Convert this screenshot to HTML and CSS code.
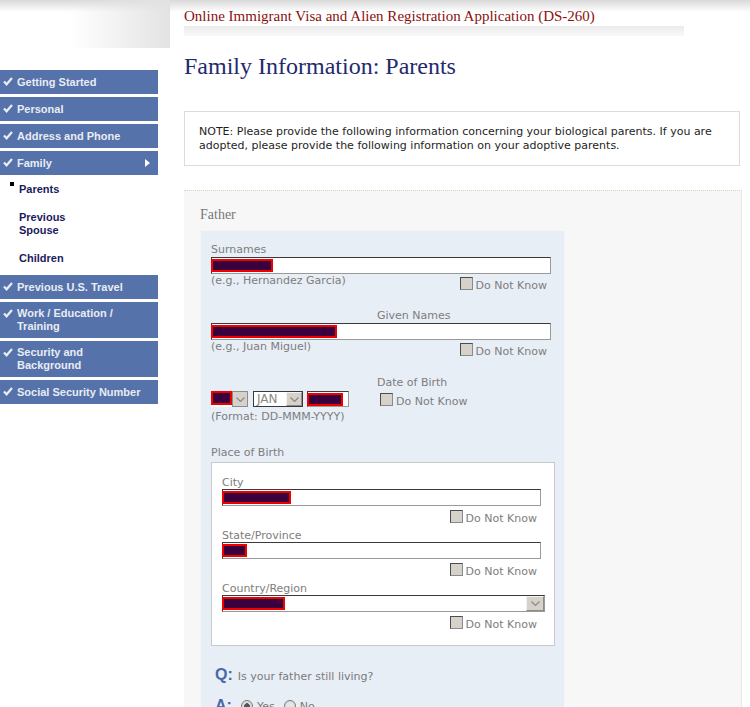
FILE: index.html
```html
<!DOCTYPE html>
<html>
<head>
<meta charset="utf-8">
<title>DS-260 Family Information: Parents</title>
<link rel="stylesheet" href="styles.css">
</head>
<body>
<div class="page">
  <aside class="side">
    <div class="brand"></div>
    <ul class="nav">
      <li class="nav-item"><svg class="chk" width="17" height="13" viewBox="0 0 17 13"><path d="M5 6.5l2.6 2.8L13 3" fill="none" stroke="#e9edf5" stroke-width="2.2"/></svg><span class="nav-text">Getting Started</span></li>
      <li class="nav-item"><svg class="chk" width="17" height="13" viewBox="0 0 17 13"><path d="M5 6.5l2.6 2.8L13 3" fill="none" stroke="#e9edf5" stroke-width="2.2"/></svg><span class="nav-text">Personal</span></li>
      <li class="nav-item"><svg class="chk" width="17" height="13" viewBox="0 0 17 13"><path d="M5 6.5l2.6 2.8L13 3" fill="none" stroke="#e9edf5" stroke-width="2.2"/></svg><span class="nav-text">Address and Phone</span></li>
      <li class="nav-item"><svg class="chk" width="17" height="13" viewBox="0 0 17 13"><path d="M5 6.5l2.6 2.8L13 3" fill="none" stroke="#e9edf5" stroke-width="2.2"/></svg><span class="nav-text">Family</span><span class="tri"></span></li>
      <li class="subs">
        <ul>
          <li class="sub current">Parents</li>
          <li class="sub">Previous Spouse</li>
          <li class="sub">Children</li>
        </ul>
      </li>
      <li class="nav-item"><svg class="chk" width="17" height="13" viewBox="0 0 17 13"><path d="M5 6.5l2.6 2.8L13 3" fill="none" stroke="#e9edf5" stroke-width="2.2"/></svg><span class="nav-text">Previous U.S. Travel</span></li>
      <li class="nav-item"><svg class="chk" width="17" height="13" viewBox="0 0 17 13"><path d="M5 6.5l2.6 2.8L13 3" fill="none" stroke="#e9edf5" stroke-width="2.2"/></svg><span class="nav-text">Work / Education / Training</span></li>
      <li class="nav-item"><svg class="chk" width="17" height="13" viewBox="0 0 17 13"><path d="M5 6.5l2.6 2.8L13 3" fill="none" stroke="#e9edf5" stroke-width="2.2"/></svg><span class="nav-text">Security and Background</span></li>
      <li class="nav-item"><svg class="chk" width="17" height="13" viewBox="0 0 17 13"><path d="M5 6.5l2.6 2.8L13 3" fill="none" stroke="#e9edf5" stroke-width="2.2"/></svg><span class="nav-text">Social Security Number</span></li>
    </ul>
  </aside>

  <main class="main">
    <div class="app-title">Online Immigrant Visa and Alien Registration Application (DS-260)</div>
    <div class="title-band"></div>
    <h1 class="page-title">Family Information: Parents</h1>

    <div class="note">NOTE: Please provide the following information concerning your biological parents. If you are adopted, please provide the following information on your adoptive parents.</div>

    <section class="panel">
      <div class="legend">Father</div>
      <div class="group">
        <div class="lbl">Surnames</div>
        <div class="input w-full"><span class="redact r-surname"></span></div>
        <div class="hint-row">
          <span class="hint">(e.g., Hernandez Garcia)</span>
          <span class="dnk"><span class="cb"></span><span class="dnk-text">Do Not Know</span></span>
        </div>

        <div class="lbl lbl-given">Given Names</div>
        <div class="input w-full"><span class="redact r-given"></span></div>
        <div class="hint-row">
          <span class="hint">(e.g., Juan Miguel)</span>
          <span class="dnk"><span class="cb"></span><span class="dnk-text">Do Not Know</span></span>
        </div>

        <div class="dob">
          <div class="dob-left">
            <div class="dob-inputs">
              <div class="sel sel-day"><span class="redact r-day"></span><span class="arrow"><svg width="9" height="5" viewBox="0 0 9 5"><path d="M.5.5l4 4 4-4" fill="none" stroke="#8a8a8a" stroke-width="1.2"/></svg></span></div>
              <div class="sel sel-month"><span class="sel-val">JAN</span><span class="arrow"><svg width="9" height="5" viewBox="0 0 9 5"><path d="M.5.5l4 4 4-4" fill="none" stroke="#8a8a8a" stroke-width="1.2"/></svg></span></div>
              <div class="input year"><span class="redact r-year"></span></div>
            </div>
            <div class="hint">(Format: DD-MMM-YYYY)</div>
          </div>
          <div class="dob-right">
            <div class="lbl">Date of Birth</div>
            <span class="dnk"><span class="cb"></span><span class="dnk-text">Do Not Know</span></span>
          </div>
        </div>

        <div class="lbl lbl-pob">Place of Birth</div>
        <div class="pob">
          <div class="lbl lbl-in">City</div>
          <div class="input w-in"><span class="redact r-city"></span></div>
          <div class="dnk-row"><span class="dnk"><span class="cb"></span><span class="dnk-text">Do Not Know</span></span></div>

          <div class="lbl lbl-in">State/Province</div>
          <div class="input w-in"><span class="redact r-state"></span></div>
          <div class="dnk-row"><span class="dnk"><span class="cb"></span><span class="dnk-text">Do Not Know</span></span></div>

          <div class="lbl lbl-in">Country/Region</div>
          <div class="sel sel-country"><span class="redact r-country"></span><span class="arrow"><svg width="9" height="5" viewBox="0 0 9 5"><path d="M.5.5l4 4 4-4" fill="none" stroke="#8a8a8a" stroke-width="1.2"/></svg></span></div>
          <div class="dnk-row"><span class="dnk"><span class="cb"></span><span class="dnk-text">Do Not Know</span></span></div>
        </div>

        <div class="qa q-line"><span class="qa-key">Q:</span><span class="qa-text">Is your father still living?</span></div>
        <div class="qa a-line"><span class="qa-key">A:</span>
          <span class="radio checked"></span><span class="radio-lbl">Yes</span>
          <span class="radio"></span><span class="radio-lbl">No</span>
        </div>
      </div>
    </section>
  </main>
</div>
</body>
</html>
```

FILE: styles.css
```css
* { box-sizing: border-box; }

html, body { height: 100%; }

body {
  margin: 0;
  background: #fff linear-gradient(#d9d9d9, #fff 12px) no-repeat;
  background-size: 100% 12px;
  font-family: "Liberation Sans", Arial, sans-serif;
  overflow: hidden;
}

.page {
  display: flex;
  align-items: flex-start;
}

/* ---------- sidebar ---------- */
.side {
  width: 170px;
  flex: none;
}

.brand {
  height: 48px;
  background: linear-gradient(to right, rgba(228,228,228,0) 70px, #e3e3e3 170px);
}

.nav {
  list-style: none;
  margin: 22px 0 0;
  padding: 0;
  width: 158px;
}

.nav-item {
  display: flex;
  align-items: center;
  min-height: 24px;
  margin-bottom: 3px;
  padding: 5px 12px 5px 0;
  background: #5672aa;
  color: #e8ecf4;
  font: bold 11px/13px "Liberation Sans", Arial, sans-serif;
}

.chk {
  display: block;
  flex: none;
  align-self: flex-start;
  margin-left: -1px;
  margin-right: 1px;
}

.nav-text { flex: 1; }

.tri {
  width: 0;
  height: 0;
  margin-right: -4px;
  border-left: 5px solid #fff;
  border-top: 4.5px solid transparent;
  border-bottom: 4.5px solid transparent;
}

.subs ul {
  list-style: none;
  margin: -2px 0 0;
  padding: 0 0 2px;
}

.sub {
  position: relative;
  width: 75px;
  padding: 7px 0 8px 19px;
  color: #1b1b5e;
  font: bold 11px/13px "Liberation Sans", Arial, sans-serif;
}

.sub.current::before {
  content: "";
  position: absolute;
  left: 10px;
  top: 6px;
  width: 4px;
  height: 4px;
  background: #000;
}

/* ---------- main ---------- */
.main {
  flex: 1;
  padding-left: 14px;
}

.app-title {
  padding-top: 7px;
  font: 15px/18px "Liberation Serif", "Times New Roman", serif;
  color: #8a1010;
}

.title-band {
  width: 500px;
  height: 10px;
  margin-top: 1px;
  background: linear-gradient(#ebebeb, #f9f9f9);
}

.page-title {
  margin: 16px 0 0;
  font: normal 24px/28px "Liberation Serif", "Times New Roman", serif;
  color: #1f2a6e;
}

.note {
  width: 556px;
  margin-top: 31px;
  padding: 13px 14px 12px;
  border: 1px solid #dcdcdc;
  font-family: "DejaVu Sans", Tahoma, sans-serif;
  font-size: 11px;
  line-height: 14px;
  color: #1e1e1e;
}

.panel {
  width: 558px;
  height: 600px;
  margin-top: 24px;
  padding: 16px 0 0 16px;
  background: #f7f7f7;
  border-top: 1px dotted #d9d5c0;
  border-right: 1px solid #e9e7de;
}

.legend {
  font: 14px/16px "Liberation Serif", "Times New Roman", serif;
  color: #777;
}

.group {
  width: 365px;
  height: 520px;
  margin-top: 7px;
  padding: 12px 0 0 10px;
  background: #e8eef6;
  border: 1px solid #f2f5fa;
  font-family: "DejaVu Sans", Verdana, sans-serif;
  font-size: 11px;
  color: #7d7d7d;
}

.lbl {
  line-height: 14px;
  color: #7d7d7d;
}

.lbl-given {
  margin-top: 16px;
  padding-left: 166px;
}

.input {
  display: flex;
  align-items: flex-start;
  height: 17px;
  background: #fff;
  border: 1px solid;
  border-color: #3a3a3a #9a9a9a #9a9a9a #3a3a3a;
}

.w-full { width: 340px; }
.w-in { width: 319px; }

.redact {
  display: block;
  flex: none;
  height: 13px;
  margin: 1px 0 0 -1px;
  background: #3a003d;
  border: 2px solid #ee0000;
}

.r-surname { width: 62px; }
.r-given { width: 126px; }
.r-city { width: 69px; }
.r-state { width: 25px; }
.r-country { width: 63px; }
.r-year { width: 36px; }
.r-day { width: 21px; height: 14px; margin: 0; }

.hint-row {
  display: flex;
  justify-content: space-between;
  width: 340px;
  padding-right: 4px;
}

.hint {
  line-height: 14px;
  color: #7d7d7d;
}

.dnk {
  display: flex;
  align-items: flex-start;
}

.cb {
  width: 13px;
  height: 13px;
  margin-top: 3px;
  background: #d6d2ca;
  border: 1px solid #4d4d4d;
  border-color: #4d4d4d #8a8a8a #8a8a8a #4d4d4d;
}

.dnk-text {
  margin: 5px 0 0 3px;
  line-height: 14px;
  color: #7d7d7d;
}

/* date of birth */
.dob {
  display: flex;
  margin-top: 17px;
}

.dob-left {
  width: 166px;
  padding-top: 15px;
}

.dob-inputs {
  display: flex;
  gap: 4px;
  margin-bottom: 3px;
}

.sel {
  display: flex;
  align-items: stretch;
  height: 16px;
  background: #fff;
  border: 1px solid #3a3a3a;
}

.sel-day {
  width: 37px;
  border: none;
}

.sel-month {
  width: 50px;
  margin-left: 1px;
}

.sel-val {
  flex: 1;
  padding-left: 3px;
  font-size: 12px;
  line-height: 14px;
  color: #888;
}

.arrow {
  display: flex;
  align-items: center;
  justify-content: center;
  width: 16px;
  margin-left: auto;
  background: #d6d2ca;
  border: 1px solid;
  border-color: #f4f3ef #8c8c8c #8c8c8c #f4f3ef;
}

.sel-day .arrow {
  border-color: #8c8c8c;
}

.year {
  width: 42px;
  height: 16px;
}

.dob-right .dnk { margin-left: 3px; }

/* place of birth */
.lbl-pob { margin-top: 22px; }

.pob {
  width: 344px;
  height: 184px;
  margin-top: 2px;
  padding: 13px 0 0 10px;
  background: #fff;
  border: 1px solid #c9c9c9;
}

.lbl-in {
  line-height: 13px;
}

.pob .dnk-row + .lbl-in { margin-top: 3px; }

.dnk-row {
  display: flex;
  justify-content: flex-end;
  width: 319px;
  padding-right: 4px;
  margin-top: 1px;
}

.sel-country {
  width: 323px;
  height: 17px;
  border-color: #3a3a3a #9a9a9a #9a9a9a #3a3a3a;
}

.sel-country .arrow { width: 18px; }

/* Q & A */
.qa {
  display: flex;
  align-items: baseline;
  padding-left: 4px;
}

.qa-key {
  font: bold 16px/18px "Liberation Sans", Arial, sans-serif;
  color: #4868a8;
}

.qa-text {
  margin-left: 5px;
  color: #7a7a7a;
}

.q-line { margin-top: 20px; }

.a-line {
  margin-top: 13px;
  align-items: center;
}

.radio {
  width: 12px;
  height: 12px;
  margin-left: 9px;
  border-radius: 50%;
  border: 1px solid #7a7a7a;
  background: radial-gradient(circle, #e6e6e6 40%, #cfcfcf 100%);
}

.radio.checked {
  background: radial-gradient(circle, #555 0 2.5px, #dcdcdc 3px);
}

.radio-lbl {
  margin-left: 4px;
  color: #7a7a7a;
}
```
